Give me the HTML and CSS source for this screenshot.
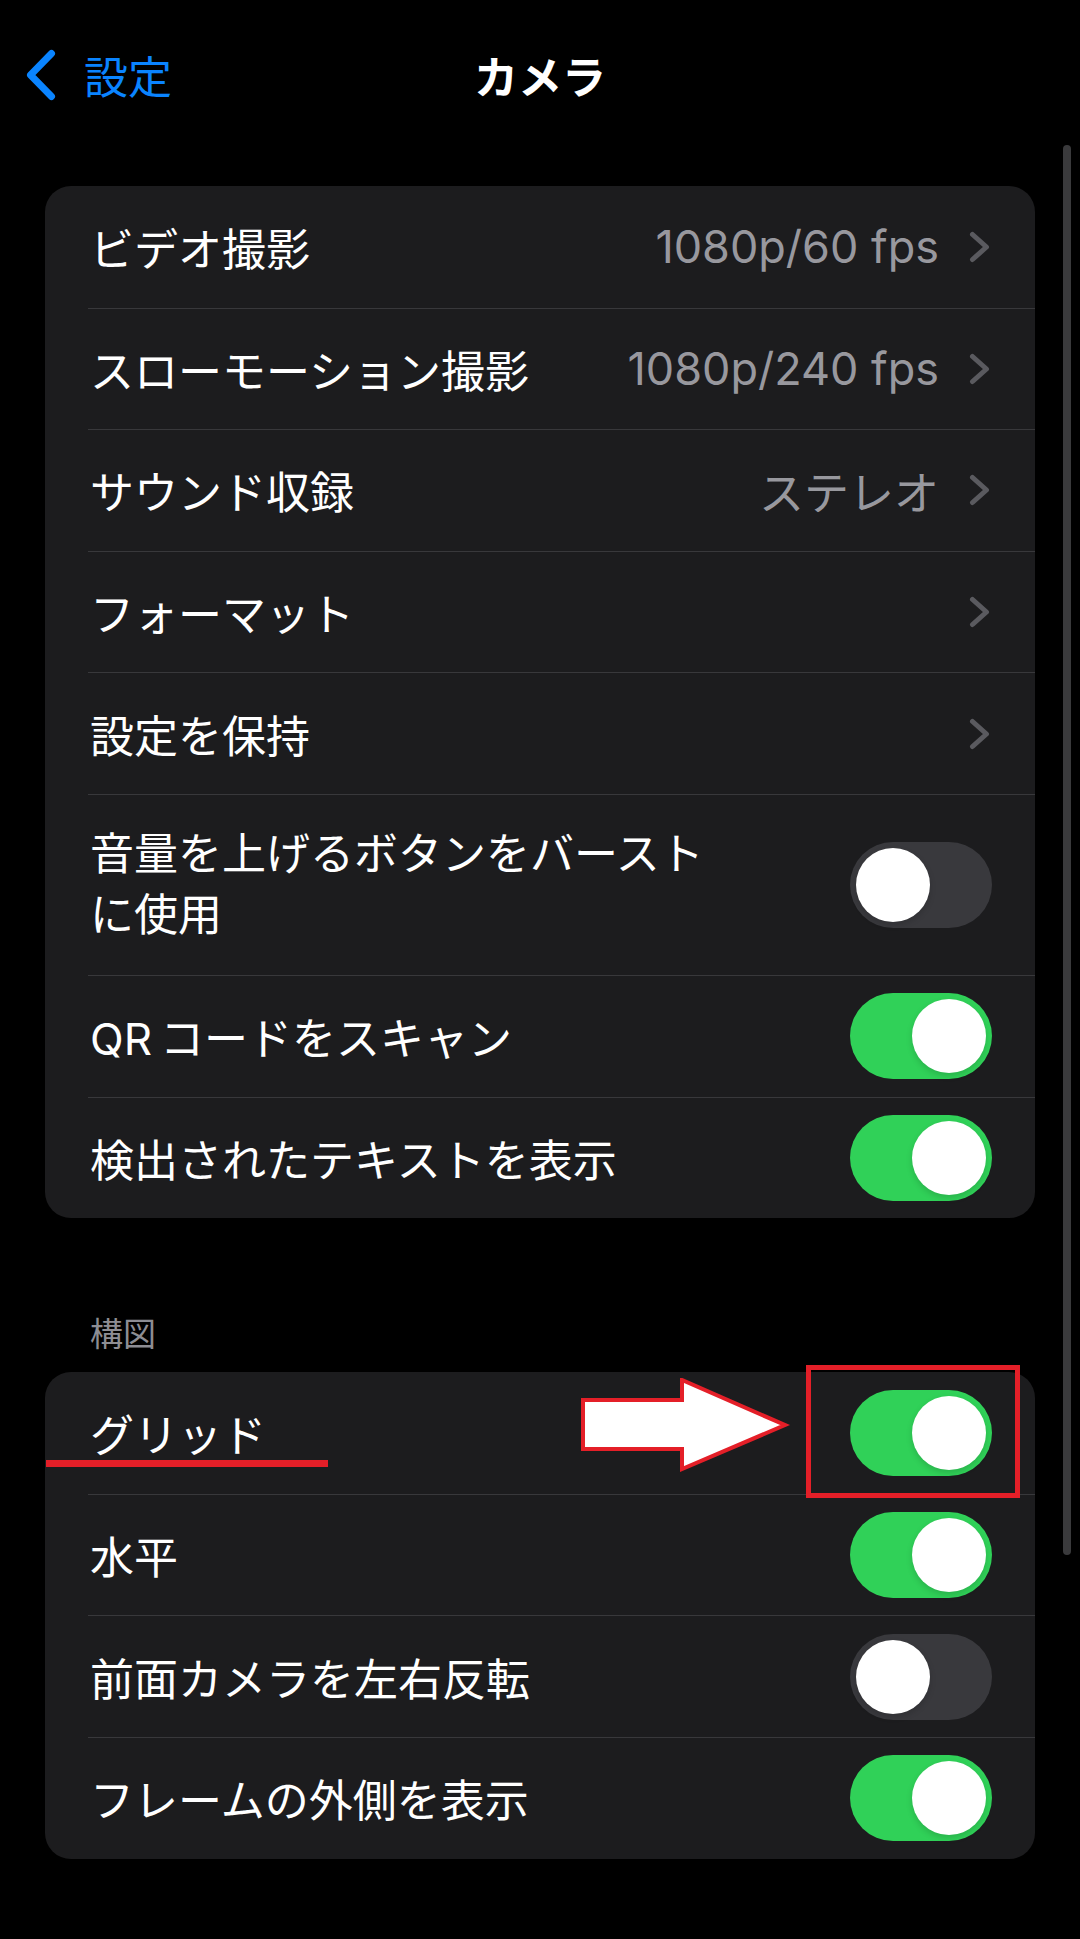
FILE: index.html
```html
<!DOCTYPE html>
<html lang="ja">
<head>
  <meta charset="UTF-8">
  <title>カメラ</title>
  <link rel="stylesheet" href="styles.css">
</head>
<body>

<div class="nav">
  <div class="nav__back">
    <svg class="nav__chevron" width="34" height="56" viewBox="0 0 34 56">
      <path d="M27.5 6.5 L6.5 28 L27.5 49.5" fill="none" stroke="#0a84ff" stroke-width="7" stroke-linecap="round" stroke-linejoin="round"/>
    </svg>
    <span>設定</span>
  </div>
  <div class="nav__title">カメラ</div>
</div>

<div class="group">
  <div class="row">
    <div class="row__inner">
      <span class="row__label">ビデオ撮影</span>
      <span class="row__value">1080p/60 fps</span>
      <svg class="row__chevron" width="22" height="32" viewBox="0 0 22 32"><path d="M3.5 3.5 L17.5 16 L3.5 28.5"/></svg>
    </div>
  </div>
  <div class="row">
    <div class="row__inner">
      <span class="row__label">スローモーション撮影</span>
      <span class="row__value">1080p/240 fps</span>
      <svg class="row__chevron" width="22" height="32" viewBox="0 0 22 32"><path d="M3.5 3.5 L17.5 16 L3.5 28.5"/></svg>
    </div>
  </div>
  <div class="row">
    <div class="row__inner">
      <span class="row__label">サウンド収録</span>
      <span class="row__value">ステレオ</span>
      <svg class="row__chevron" width="22" height="32" viewBox="0 0 22 32"><path d="M3.5 3.5 L17.5 16 L3.5 28.5"/></svg>
    </div>
  </div>
  <div class="row">
    <div class="row__inner">
      <span class="row__label">フォーマット</span>
      <svg class="row__chevron" width="22" height="32" viewBox="0 0 22 32"><path d="M3.5 3.5 L17.5 16 L3.5 28.5"/></svg>
    </div>
  </div>
  <div class="row">
    <div class="row__inner">
      <span class="row__label">設定を保持</span>
      <svg class="row__chevron" width="22" height="32" viewBox="0 0 22 32"><path d="M3.5 3.5 L17.5 16 L3.5 28.5"/></svg>
    </div>
  </div>
  <div class="row">
    <div class="row__inner row__inner--tall">
      <span class="row__label">音量を上げるボタンをバースト<br>に使用</span>
      <span class="switch"><span class="switch__knob"></span></span>
    </div>
  </div>
  <div class="row">
    <div class="row__inner">
      <span class="row__label">QR&thinsp;コードをスキャン</span>
      <span class="switch switch--on"><span class="switch__knob"></span></span>
    </div>
  </div>
  <div class="row">
    <div class="row__inner">
      <span class="row__label">検出されたテキストを表示</span>
      <span class="switch switch--on"><span class="switch__knob"></span></span>
    </div>
  </div>
</div>

<div class="section-title">構図</div>

<div class="group">
  <div class="row row--marked">
    <div class="row__inner">
      <span class="row__label">グリッド</span>
      <span class="switch switch--on"><span class="switch__knob"></span></span>
    </div>
    <!-- annotations -->
    <span class="mark-underline"></span>
    <svg class="mark-arrow" width="210" height="94" viewBox="0 0 210 94">
      <polygon points="2,22 101,22 101,2 204,47 101,91 101,71 2,71" fill="#fff" stroke="#e41f28" stroke-width="4"/>
    </svg>
    <span class="mark-box"></span>
  </div>
  <div class="row">
    <div class="row__inner">
      <span class="row__label">水平</span>
      <span class="switch switch--on"><span class="switch__knob"></span></span>
    </div>
  </div>
  <div class="row">
    <div class="row__inner">
      <span class="row__label">前面カメラを左右反転</span>
      <span class="switch"><span class="switch__knob"></span></span>
    </div>
  </div>
  <div class="row">
    <div class="row__inner">
      <span class="row__label">フレームの外側を表示</span>
      <span class="switch switch--on"><span class="switch__knob"></span></span>
    </div>
  </div>
</div>

<div class="scrollbar"></div>

</body>
</html>
```

FILE: styles.css
```css
body {
  margin: 0;
  min-height: 1939px;
  position: relative;
  background-color: #000;
  color: #fff;
  font-family: Inter, 'Noto Sans CJK JP', sans-serif;
}
.nav {
  display: grid;
  grid-template-columns: 1fr auto 1fr;
  align-items: center;
  height: 150px;
  padding-left: 24px;
  padding-right: 24px;
}
.nav__back {
  display: flex;
  align-items: center;
  gap: 26px;
  color: #0a84ff;
  font-size: 44px;
  font-family: 'Noto Sans CJK JP', sans-serif;
}
.nav__chevron {
  display: block;
}
.nav__title {
  font-size: 44px;
  font-weight: 700;
  font-family: 'Noto Sans CJK JP', sans-serif;
}
.group {
  margin: 36px 45px 0;
  background-color: #1c1c1e;
  border-radius: 26px;
}
.row {
  padding-left: 43px;
}
.row__inner {
  display: flex;
  align-items: center;
  box-sizing: border-box;
  min-height: 121.6px;
  padding: 0 44px 0 2px;
  border-top: 1px solid #38383b;
  font-size: 44px;
}
.row:first-child .row__inner {
  border-top: none;
}
.row__inner--tall {
  padding-top: 29px;
  padding-bottom: 29px;
}
.row__inner--tall .row__label {
  line-height: 61px;
}
.row__label {
  flex: 1;
}
.row__value {
  margin-right: 30px;
  font-size: 45px;
  color: #98989e;
}
.row__chevron {
  display: block;
}
.row__chevron path {
  fill: none;
  stroke: #5a5a5f;
  stroke-width: 5;
  stroke-linecap: round;
  stroke-linejoin: round;
}
.switch {
  display: flex;
  box-sizing: border-box;
  width: 142px;
  height: 86px;
  padding: 6px;
  margin-right: -1px;
  border-radius: 43px;
  background-color: #39393d;
}
.switch--on {
  justify-content: flex-end;
  background-color: #30d158;
}
.switch__knob {
  width: 74px;
  height: 74px;
  border-radius: 50%;
  background-color: #fff;
  box-shadow: 0 3px 6px rgba(0, 0, 0, 0.15);
}
.section-title {
  padding: 96px 0 18px 90px;
  font-size: 33px;
  line-height: 40px;
  color: #8d8d93;
}
.section-title + .group {
  margin-top: 0;
}
.row--marked {
  position: relative;
}
.mark-underline {
  position: absolute;
  left: 1px;
  top: 88px;
  width: 282px;
  height: 7px;
  background-color: #e41f28;
}
.mark-arrow {
  position: absolute;
  left: 536px;
  top: 6px;
}
.mark-box {
  position: absolute;
  left: 761px;
  top: -7px;
  width: 214px;
  height: 133px;
  box-sizing: border-box;
  border: 5px solid #e41f28;
}
.scrollbar {
  position: absolute;
  left: 1063px;
  top: 145px;
  width: 8px;
  height: 1410px;
  border-radius: 4px;
  background-color: #3a3a3c;
}
```
